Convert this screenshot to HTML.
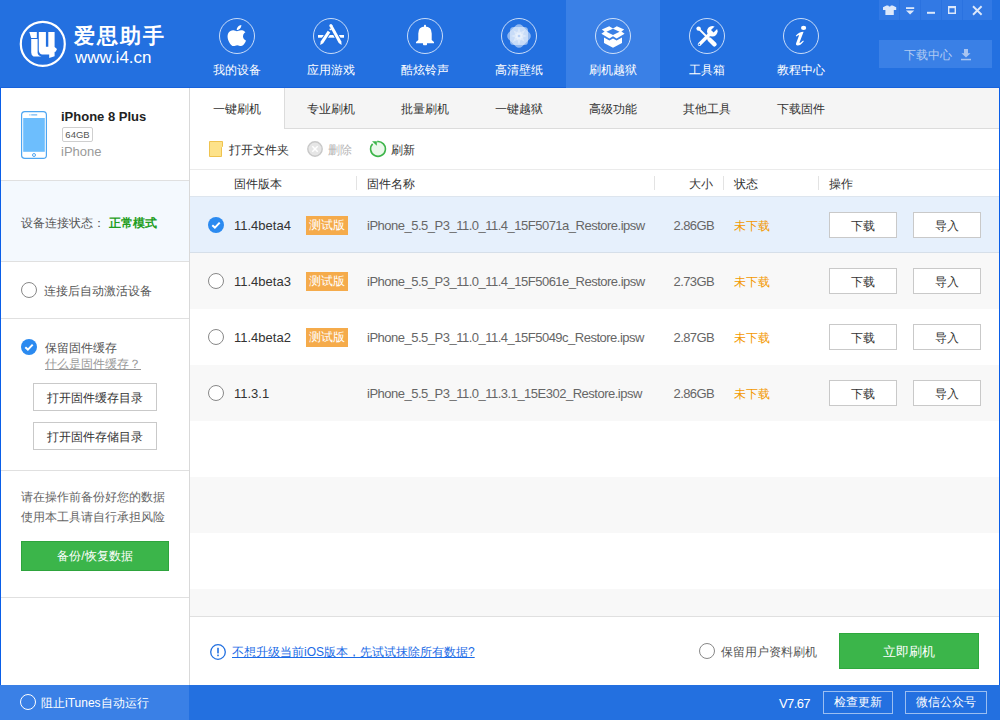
<!DOCTYPE html>
<html><head><meta charset="utf-8">
<style>
*{margin:0;padding:0;box-sizing:border-box}
html,body{width:1000px;height:720px;overflow:hidden;background:#fff}
body{position:relative;font-family:"Liberation Sans",sans-serif;font-size:12px;color:#333}
.a{position:absolute}
.hdr{left:0;top:0;width:1000px;height:88px;background:#2370e0}
.nav{top:0;width:94px;height:88px;text-align:center;color:#fff}
.nav.sel{background:#3a80e6}
.nav .c{position:absolute;left:29px;top:18px;width:36px;height:36px;border:1px solid rgba(255,255,255,.75);border-radius:50%}
.nav .t{position:absolute;left:0;width:94px;top:62px;font-size:12px;line-height:16px;color:#fff}
.nav svg{position:absolute;left:0;top:0}
.tabbar{left:190px;top:88px;width:809px;height:41px;background:#f5f5f5;border-bottom:1px solid #dcdcdc}
.tab{top:88px;width:94px;height:40px;line-height:42px;text-align:center;color:#333;font-size:12px}
.tab.sel{background:#fff;border-right:1px solid #dcdcdc;height:41px;width:95px}
.side{left:0;top:88px;width:190px;height:597px;background:#fff;border-right:1px solid #d9d9d9}
.hl{height:1px;background:#e0e0e0}
.row{left:190px;width:809px;height:56px}
.btn{background:#fff;border:1px solid #c9c9c9;text-align:center;color:#333}
.radio{width:16px;height:16px;border:1px solid #888;border-radius:50%;background:#fff}
.chk{width:16px;height:16px;border-radius:50%;background:#2b8af0}
.badge{width:42px;height:18px;background:#f5a94a;color:#fff;text-align:center;line-height:18px;font-size:12px}
.ver{font-size:13px;color:#333;font-weight:bold}
.fn{font-size:13px;color:#666}
.sz{font-size:13px;color:#666}
.st{color:#f39800;font-size:12px}
</style></head><body>
<!-- header -->
<div class="a hdr"></div>
<div class="a" style="left:0;top:87px;width:1000px;height:1px;background:#1762dc"></div>


<!-- nav items -->
<div class="a nav" style="left:190px"><div class="c"></div><div class="t">我的设备</div></div>
<div class="a nav" style="left:284px"><div class="c"></div><div class="t">应用游戏</div></div>
<div class="a nav" style="left:378px"><div class="c"></div><div class="t">酷炫铃声</div></div>
<div class="a nav" style="left:472px"><div class="c"></div><div class="t">高清壁纸</div></div>
<div class="a nav sel" style="left:566px"><div class="c"></div><div class="t">刷机越狱</div></div>
<div class="a nav" style="left:660px"><div class="c"></div><div class="t">工具箱</div></div>
<div class="a nav" style="left:754px"><div class="c"></div><div class="t">教程中心</div></div>

<!-- logo -->
<svg class="a" style="left:0;top:0" width="180" height="88" viewBox="0 0 180 88">
<circle cx="42.8" cy="43.9" r="22" fill="none" stroke="#fff" stroke-width="2.2"/>
<path d="M29.3 32 H36.8 V38 H31.2 Z" fill="#fff"/>
<path d="M31.2 39 H37.6 V53 Q38 55.5 41.5 56.6 H33.5 Q31.2 55.5 31.2 52.5 Z" fill="#fff"/>
<path d="M38.8 32 H45.9 V46.7 H48.3 V32 H54.6 V47 L57 49 L55.8 51.5 L54.6 52 V56.2 L49.2 58.1 V54.6 H42 Q38.8 53.5 38.8 50 Z" fill="#fff"/>
</svg>
<div class="a" style="left:74px;top:24px;font-size:21px;line-height:24px;font-weight:bold;color:#fff;letter-spacing:2px">爱思助手</div>
<div class="a" style="left:75px;top:48px;font-size:17px;line-height:19px;color:#fff;letter-spacing:0px">www.i4.cn</div>

<!-- nav icons -->
<svg class="a" style="left:219px;top:18px" width="36" height="36" viewBox="0 0 36 36">
<g transform="translate(9.2,7.1) scale(0.945,0.875) translate(-2.9,0)" fill="#fff"><path d="M12.152 6.896c-.948 0-2.415-1.078-3.960-1.040-2.040.027-3.910 1.183-4.961 3.014-2.117 3.675-.546 9.103 1.519 12.090 1.013 1.454 2.208 3.090 3.792 3.039 1.520-.065 2.090-.987 3.935-.987 1.831 0 2.350.987 3.960.948 1.637-.026 2.676-1.480 3.676-2.948 1.156-1.688 1.636-3.325 1.662-3.415-.039-.013-3.182-1.221-3.220-4.857-.026-3.040 2.480-4.494 2.597-4.559-1.429-2.090-3.623-2.324-4.390-2.376-2-.156-3.675 1.090-4.610 1.090zM15.530 3.830c.843-1.012 1.400-2.427 1.245-3.830-1.207.052-2.662.805-3.532 1.818-.780.896-1.454 2.338-1.273 3.714 1.338.104 2.715-.688 3.559-1.701"/></g>
</svg>
<svg class="a" style="left:313px;top:18px" width="36" height="36" viewBox="0 0 36 36">
<rect x="5" y="17" width="26" height="2.7" fill="#fff"/>
<path d="M16.59 8.32 L25.74 24.92 L28.60 27.00 L28.37 23.47 L19.21 6.88 Z" fill="#2370e0" stroke="#2370e0" stroke-width="2" stroke-linejoin="round"/>
<path d="M14.75 12.78 L7.70 23.50 L7.20 27.00 L10.21 25.15 L17.25 14.42 Z" fill="#2370e0" stroke="#2370e0" stroke-width="2" stroke-linejoin="round"/>
<path d="M16.59 8.32 L25.74 24.92 L28.60 27.00 L28.37 23.47 L19.21 6.88 Z" fill="#fff"/>
<path d="M14.75 12.78 L7.70 23.50 L7.20 27.00 L10.21 25.15 L17.25 14.42 Z" fill="#fff"/>
<circle cx="17.9" cy="7.6" r="1.5" fill="#fff"/>
<path d="M17.0 10.3 L18.8 11.3 L18.0 12.6 L16.3 11.6 Z" fill="#fff"/>
</svg>
<svg class="a" style="left:407px;top:18px" width="36" height="36" viewBox="0 0 36 36" fill="#fff">
<rect x="17" y="6.8" width="2" height="2.5" rx="0.8"/>
<path d="M11.3 22 V15.5 Q11.3 8.6 18 8.6 Q24.7 8.6 24.7 15.5 V22 L27 24 V25.3 H9 V24 Z"/>
<path d="M16 25 H20 V26.3 Q20 27.2 19.2 27.2 H16.8 Q16 27.2 16 26.3 Z"/>
</svg>
<svg class="a" style="left:501px;top:18px" width="36" height="36" viewBox="0 0 36 36" fill="#fff">
<rect x="9" y="9" width="18" height="18" rx="3.5" opacity="0.5"/>
<rect x="8.35" y="8.35" width="19.3" height="19.3" rx="4.5" opacity="0.5" transform="rotate(45 18 18)"/>
<path d="M18 9 L20.2 15.8 L26 18 L20.2 20.2 L18 27 L15.8 20.2 L10 18 L15.8 15.8 Z" opacity="0.35"/>
<path d="M18 9 L20.2 15.8 L26 18 L20.2 20.2 L18 27 L15.8 20.2 L10 18 L15.8 15.8 Z" opacity="0.35" transform="rotate(45 18 18)"/>
<circle cx="18" cy="18" r="1.3" fill="#b9d0f5"/>
</svg>
<svg class="a" style="left:595px;top:18px" width="36" height="36" viewBox="0 0 36 36" fill="#fff">
<path d="M6.8 11.6 L14.2 8.2 L18 10.4 L21.8 8.2 L29.2 11.6 L26.4 13.6 L29.6 15.8 L21.6 20.4 L18 18.2 L14.4 20.4 L6.4 15.8 L9.6 13.6 Z"/>
<path d="M11.4 13.7 L18 10.8 L24.6 13.7 L18 16.9 Z" fill="#3a80e6"/>
<path d="M9 19.6 L14.4 22.6 L18 20.4 L21.6 22.6 L27 19.6 V25 L18 29.8 L9 25 Z"/>
</svg>
<svg class="a" style="left:689px;top:18px" width="36" height="36" viewBox="0 0 36 36">
<path d="M10 11 L19.5 20.5" stroke="#fff" stroke-width="1.8"/>
<circle cx="9.6" cy="10.6" r="2.2" fill="#fff"/>
<path d="M20.5 21.5 L25.5 26.3" stroke="#fff" stroke-width="4.4" stroke-linecap="round"/>
<path d="M10.5 26.3 L21 15.8" stroke="#fff" stroke-width="3.4" stroke-linecap="round"/>
<circle cx="23.3" cy="13.3" r="5.3" fill="#fff"/>
<path d="M23.3 13.3 L28.6 8" stroke="#2370e0" stroke-width="3.6"/>
<circle cx="10.3" cy="26.4" r="0.8" fill="#2370e0"/>
</svg>
<svg class="a" style="left:783px;top:18px" width="36" height="36" viewBox="0 0 36 36" fill="#fff">
<ellipse cx="20.6" cy="9.9" rx="2.6" ry="2.1"/>
<path d="M12.8 17.8 Q16 14 20.6 13.8 L16.6 24.2 Q16.4 25.2 17.4 24.8 Q18.6 24.2 20.2 22.6 L20.8 23.2 Q17.8 27.4 14.6 27.4 Q12.4 27.4 13.2 25 L16.2 16.9 Q14.8 17.2 13.4 18.4 Z"/>
</svg>

<!-- window controls -->
<div class="a" style="left:879px;top:0;width:113px;height:20px;background:#3279e4"></div>
<div class="a" style="left:899px;top:0;width:1px;height:20px;background:#2a72e0"></div>
<div class="a" style="left:920px;top:0;width:1px;height:20px;background:#2a72e0"></div>
<div class="a" style="left:941px;top:0;width:1px;height:20px;background:#2a72e0"></div>
<div class="a" style="left:962px;top:0;width:1px;height:20px;background:#2a72e0"></div>
<svg class="a" style="left:879px;top:0" width="113" height="20" viewBox="0 0 113 20">
<path d="M4 7.2 L7.5 5.4 H9.3 Q10 6.6 10.6 6.6 Q11.2 6.6 11.9 5.4 H13.7 L17.2 7.2 V10 L14.8 10 V15 H6.4 V10 L4 10 Z" fill="#dde8fa"/>
<rect x="27" y="7.2" width="8.2" height="1.8" fill="#dde8fa"/>
<path d="M27 10.4 H35.2 L31.1 14.6 Z" fill="#dde8fa"/>
<rect x="48" y="11.8" width="8" height="2" fill="#dde8fa"/>
<path d="M69.7 6.8 H76.3 V13.2 H69.7 Z" fill="none" stroke="#dde8fa" stroke-width="1.4"/>
<rect x="69" y="6" width="8" height="2.2" fill="#dde8fa"/>
<path d="M94 6.3 L102.6 14.7 M102.6 6.3 L94 14.7" stroke="#dde8fa" stroke-width="1.9"/>
</svg>

<!-- download center -->
<div class="a" style="left:879px;top:40px;width:113px;height:28px;background:#3a80e6"></div>
<div class="a" style="left:904px;top:46px;line-height:18px;color:#b2cbf2">下载中心</div>
<svg class="a" style="left:960px;top:48px" width="12" height="13" viewBox="0 0 12 13" fill="#a9c5f1">
<path d="M4 1 H8 V5.2 H10.5 L6 9.6 L1.5 5.2 H4 Z"/><rect x="1" y="10.8" width="10" height="1.5"/>
</svg>

<!-- sidebar -->
<div class="a side"></div>
<div class="a" style="left:0;top:88px;width:1px;height:632px;background:#0a5ee8"></div>
<div class="a" style="left:999px;top:88px;width:1px;height:632px;background:#0a5ee8"></div>


<!-- sidebar content -->
<svg class="a" style="left:21px;top:111px" width="26" height="48" viewBox="0 0 26 48">
<rect x="0.6" y="0.6" width="24.8" height="46.8" rx="3.2" fill="#fff" stroke="#4ea6f2" stroke-width="1.2"/>
<rect x="2.2" y="7" width="21.6" height="33.8" fill="#6dbefd"/>
<rect x="10.2" y="3.4" width="6" height="1" fill="#4ea6f2"/><rect x="8.4" y="3.4" width="1" height="1" fill="#4ea6f2"/>
<circle cx="13" cy="44" r="1.5" fill="none" stroke="#4ea6f2" stroke-width="1"/>
</svg>
<div class="a" style="left:61px;top:109px;font-size:13px;font-weight:bold;color:#222;line-height:16px">iPhone 8 Plus</div>
<div class="a" style="left:62px;top:127px;width:31px;height:15px;border:1px solid #cfcfcf;border-radius:2px;font-size:9.5px;line-height:13px;text-align:center;color:#555">64GB</div>
<div class="a" style="left:61px;top:144px;font-size:13px;color:#9a9a9a;line-height:16px">iPhone</div>
<div class="a hl" style="left:1px;top:180px;width:188px"></div>
<div class="a" style="left:1px;top:181px;width:188px;height:80px;background:#f4f9fe"></div>
<div class="a" style="left:21px;top:214px;line-height:18px;color:#555">设备连接状态：<b style="color:#1f9e22;margin-left:4px">正常模式</b></div>
<div class="a hl" style="left:1px;top:261px;width:188px"></div>
<div class="a radio" style="left:21px;top:282px"></div>
<div class="a" style="left:44px;top:282px;line-height:18px;color:#555">连接后自动激活设备</div>
<div class="a hl" style="left:1px;top:318px;width:188px"></div>
<svg class="a" style="left:21px;top:339px" width="16" height="16" viewBox="0 0 16 16"><circle cx="8" cy="8" r="8" fill="#2b8af0"/><path d="M4.3 8.2 L6.9 10.6 L11.7 5.6" fill="none" stroke="#fff" stroke-width="2"/></svg>
<div class="a" style="left:45px;top:339px;line-height:18px;color:#555">保留固件缓存</div>
<div class="a" style="left:45px;top:355px;line-height:18px;color:#999;text-decoration:underline">什么是固件缓存？</div>
<div class="a btn" style="left:33px;top:383px;width:124px;height:28px;line-height:28px">打开固件缓存目录</div>
<div class="a btn" style="left:33px;top:422px;width:124px;height:28px;line-height:28px">打开固件存储目录</div>
<div class="a hl" style="left:1px;top:470px;width:188px"></div>
<div class="a" style="left:21px;top:487px;line-height:20px;color:#666">请在操作前备份好您的数据<br>使用本工具请自行承担风险</div>
<div class="a" style="left:21px;top:541px;width:148px;height:30px;background:#3bb54a;border:1px solid #2ea43d;color:#fff;text-align:center;line-height:29px">备份/恢复数据</div>
<div class="a hl" style="left:1px;top:597px;width:188px"></div>

<!-- tabs -->
<div class="a tabbar"></div>
<div class="a tab sel" style="left:190px">一键刷机</div>
<div class="a tab" style="left:284px">专业刷机</div>
<div class="a tab" style="left:378px">批量刷机</div>
<div class="a tab" style="left:472px">一键越狱</div>
<div class="a tab" style="left:566px">高级功能</div>
<div class="a tab" style="left:660px">其他工具</div>
<div class="a tab" style="left:754px">下载固件</div>


<!-- toolbar -->
<svg class="a" style="left:209px;top:141px" width="14" height="16" viewBox="0 0 14 16"><path d="M0.5 0.5 H13.5 V5.5 L12.5 6.5 V15.5 H0.5 Z" fill="#fde28a" stroke="#efc34f" stroke-width="1"/></svg>
<div class="a" style="left:229px;top:141px;line-height:18px;color:#333">打开文件夹</div>
<svg class="a" style="left:307px;top:141px" width="16" height="16" viewBox="0 0 16 16"><circle cx="8" cy="8" r="7.2" fill="#e6e6e6" stroke="#c8c8c8" stroke-width="1.4"/><path d="M5.3 5.3 L10.7 10.7 M10.7 5.3 L5.3 10.7" stroke="#fff" stroke-width="1.5"/></svg>
<div class="a" style="left:328px;top:141px;line-height:18px;color:#b5b5b5">删除</div>
<svg class="a" style="left:369px;top:140px" width="18" height="18" viewBox="0 0 18 18"><circle cx="9" cy="9" r="7.4" fill="#ebf8eb"/><path d="M8.2 1.6 A7.4 7.4 0 1 1 3.6 3.9" fill="none" stroke="#3db54a" stroke-width="1.6"/><path d="M3 1.2 L7.8 1.2 L7.8 5.8 Z" fill="#3db54a"/></svg>
<div class="a" style="left:391px;top:141px;line-height:18px;color:#333">刷新</div>
<div class="a" style="left:190px;top:169px;width:809px;height:1px;background:#ebebeb"></div>

<!-- table header -->
<div class="a" style="left:234px;top:175px;line-height:18px;color:#333">固件版本</div>
<div class="a" style="left:367px;top:175px;line-height:18px;color:#333">固件名称</div>
<div class="a" style="left:689px;top:175px;line-height:18px;color:#333">大小</div>
<div class="a" style="left:734px;top:175px;line-height:18px;color:#333">状态</div>
<div class="a" style="left:829px;top:175px;line-height:18px;color:#333">操作</div>
<div class="a" style="left:356px;top:176px;width:1px;height:14px;background:#e3e3e3"></div>
<div class="a" style="left:654px;top:176px;width:1px;height:14px;background:#e3e3e3"></div>
<div class="a" style="left:723px;top:176px;width:1px;height:14px;background:#e3e3e3"></div>
<div class="a" style="left:818px;top:176px;width:1px;height:14px;background:#e3e3e3"></div>

<!-- rows -->
<div class="a" style="left:190px;top:196px;width:809px;height:57px;background:#e6f0fc;border-top:1px solid #dde5ee;border-bottom:1px solid #d6dfe9"></div>
<div class="a" style="left:190px;top:253px;width:809px;height:56px;background:#f8f8f8"></div>
<div class="a" style="left:190px;top:365px;width:809px;height:56px;background:#f8f8f8"></div>
<div class="a" style="left:190px;top:477px;width:809px;height:56px;background:#f8f8f8"></div>
<div class="a" style="left:190px;top:589px;width:809px;height:27px;background:#f8f8f8"></div>
<div class="a" style="left:190px;top:616px;width:809px;height:1px;background:#e0e0e0"></div>
<svg class="a" style="left:208px;top:217px" width="16" height="16" viewBox="0 0 16 16"><circle cx="8" cy="8" r="8" fill="#2b8af0"/><path d="M4.3 8.2 L6.9 10.6 L11.7 5.6" fill="none" stroke="#fff" stroke-width="2"/></svg>
<div class="a" style="left:234px;top:217px;line-height:18px;font-size:13px;color:#333">11.4beta4</div>
<div class="a" style="left:306px;top:216px;width:42px;height:19px;background:#f5ab4b;color:#fff;text-align:center;line-height:19px">测试版</div>
<div class="a" style="left:367px;top:217px;line-height:18px;font-size:13px;color:#666;letter-spacing:-0.5px">iPhone_5.5_P3_11.0_11.4_15F5071a_Restore.ipsw</div>
<div class="a" style="left:614px;width:100px;text-align:right;top:217px;line-height:18px;font-size:13px;color:#666;letter-spacing:-0.6px">2.86GB</div>
<div class="a" style="left:734px;top:217px;line-height:18px;color:#f39800">未下载</div>
<div class="a btn" style="left:829px;top:212px;width:68px;height:26px;line-height:26px">下载</div>
<div class="a btn" style="left:913px;top:212px;width:68px;height:26px;line-height:26px">导入</div>
<div class="a radio" style="left:208px;top:273px"></div>
<div class="a" style="left:234px;top:273px;line-height:18px;font-size:13px;color:#333">11.4beta3</div>
<div class="a" style="left:306px;top:272px;width:42px;height:19px;background:#f5ab4b;color:#fff;text-align:center;line-height:19px">测试版</div>
<div class="a" style="left:367px;top:273px;line-height:18px;font-size:13px;color:#666;letter-spacing:-0.5px">iPhone_5.5_P3_11.0_11.4_15F5061e_Restore.ipsw</div>
<div class="a" style="left:614px;width:100px;text-align:right;top:273px;line-height:18px;font-size:13px;color:#666;letter-spacing:-0.6px">2.73GB</div>
<div class="a" style="left:734px;top:273px;line-height:18px;color:#f39800">未下载</div>
<div class="a btn" style="left:829px;top:268px;width:68px;height:26px;line-height:26px">下载</div>
<div class="a btn" style="left:913px;top:268px;width:68px;height:26px;line-height:26px">导入</div>
<div class="a radio" style="left:208px;top:329px"></div>
<div class="a" style="left:234px;top:329px;line-height:18px;font-size:13px;color:#333">11.4beta2</div>
<div class="a" style="left:306px;top:328px;width:42px;height:19px;background:#f5ab4b;color:#fff;text-align:center;line-height:19px">测试版</div>
<div class="a" style="left:367px;top:329px;line-height:18px;font-size:13px;color:#666;letter-spacing:-0.5px">iPhone_5.5_P3_11.0_11.4_15F5049c_Restore.ipsw</div>
<div class="a" style="left:614px;width:100px;text-align:right;top:329px;line-height:18px;font-size:13px;color:#666;letter-spacing:-0.6px">2.87GB</div>
<div class="a" style="left:734px;top:329px;line-height:18px;color:#f39800">未下载</div>
<div class="a btn" style="left:829px;top:324px;width:68px;height:26px;line-height:26px">下载</div>
<div class="a btn" style="left:913px;top:324px;width:68px;height:26px;line-height:26px">导入</div>
<div class="a radio" style="left:208px;top:385px"></div>
<div class="a" style="left:234px;top:385px;line-height:18px;font-size:13px;color:#333">11.3.1</div>
<div class="a" style="left:367px;top:385px;line-height:18px;font-size:13px;color:#666;letter-spacing:-0.5px">iPhone_5.5_P3_11.0_11.3.1_15E302_Restore.ipsw</div>
<div class="a" style="left:614px;width:100px;text-align:right;top:385px;line-height:18px;font-size:13px;color:#666;letter-spacing:-0.6px">2.86GB</div>
<div class="a" style="left:734px;top:385px;line-height:18px;color:#f39800">未下载</div>
<div class="a btn" style="left:829px;top:380px;width:68px;height:26px;line-height:26px">下载</div>
<div class="a btn" style="left:913px;top:380px;width:68px;height:26px;line-height:26px">导入</div>

<!-- bottom -->
<svg class="a" style="left:210px;top:644px" width="16" height="16" viewBox="0 0 16 16"><circle cx="8" cy="8" r="7.3" fill="none" stroke="#2270e0" stroke-width="1.3"/><rect x="7.2" y="3.8" width="1.6" height="5.6" fill="#2270e0"/><rect x="7.2" y="10.6" width="1.6" height="1.6" fill="#2270e0"/></svg>
<div class="a" style="left:232px;top:643px;line-height:18px;color:#1b6be6;text-decoration:underline">不想升级当前iOS版本，先试试抹除所有数据?</div>
<div class="a radio" style="left:699px;top:643px"></div>
<div class="a" style="left:721px;top:643px;line-height:18px;color:#555">保留用户资料刷机</div>
<div class="a" style="left:839px;top:633px;width:140px;height:36px;background:#3bb54a;border:1px solid #2ea83d;color:#fff;text-align:center;line-height:35px;font-size:13px">立即刷机</div>

<!-- status bar -->
<div class="a" style="left:0;top:685px;width:1000px;height:35px;background:#2370e0"></div>
<div class="a" style="left:0;top:685px;width:189px;height:35px;background:#3a80e6"></div>
<!-- status bar content -->
<div class="a" style="left:20px;top:694px;width:16px;height:16px;border:1px solid #fff;border-radius:50%"></div>
<div class="a" style="left:41px;top:694px;line-height:18px;color:#fff">阻止iTunes自动运行</div>
<div class="a" style="left:779px;top:695px;line-height:18px;color:#fff;font-size:13px;letter-spacing:-0.6px">V7.67</div>
<div class="a" style="left:823px;top:691px;width:70px;height:23px;border:1px solid rgba(255,255,255,.55);color:#fff;text-align:center;line-height:21px">检查更新</div>
<div class="a" style="left:905px;top:691px;width:82px;height:23px;border:1px solid rgba(255,255,255,.55);color:#fff;text-align:center;line-height:21px">微信公众号</div>

</body></html>
